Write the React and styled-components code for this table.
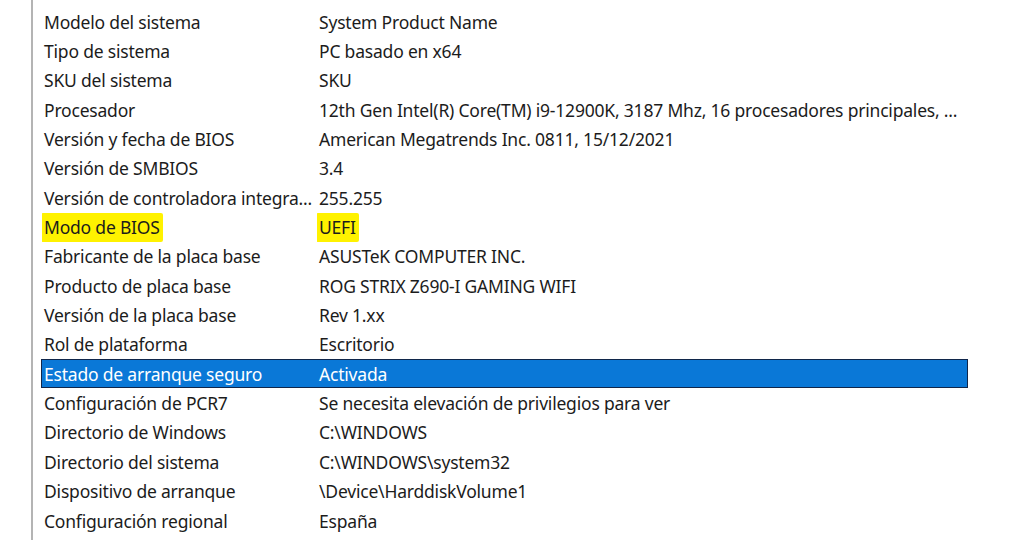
import React from 'react';
import styled, { createGlobalStyle } from 'styled-components';

const rows = [
  ['Modelo del sistema', 'System Product Name'],
  ['Tipo de sistema', 'PC basado en x64'],
  ['SKU del sistema', 'SKU'],
  ['Procesador', '12th Gen Intel(R) Core(TM) i9-12900K, 3187 Mhz, 16 procesadores principales, ...'],
  ['Versión y fecha de BIOS', 'American Megatrends Inc. 0811, 15/12/2021'],
  ['Versión de SMBIOS', '3.4'],
  ['Versión de controladora integra...', '255.255'],
  ['Modo de BIOS', 'UEFI', 'marked'],
  ['Fabricante de la placa base', 'ASUSTeK COMPUTER INC.'],
  ['Producto de placa base', 'ROG STRIX Z690-I GAMING WIFI'],
  ['Versión de la placa base', 'Rev 1.xx'],
  ['Rol de plataforma', 'Escritorio'],
  ['Estado de arranque seguro', 'Activada', 'selected'],
  ['Configuración de PCR7', 'Se necesita elevación de privilegios para ver'],
  ['Directorio de Windows', 'C:\\WINDOWS'],
  ['Directorio del sistema', 'C:\\WINDOWS\\system32'],
  ['Dispositivo de arranque', '\\Device\\HarddiskVolume1'],
  ['Configuración regional', 'España'],
];

export default function App() {
  return (
    <>
      <GlobalStyle />
      <Page>
        <Panel>
          {rows.map(([label, value, state]) => (
            <Row key={label} $selected={state === 'selected'}>
              <Cell>
                {state === 'marked' ? <Marker>{label}</Marker> : label}
              </Cell>
              <Cell>
                {state === 'marked' ? <Marker>{value}</Marker> : value}
              </Cell>
            </Row>
          ))}
        </Panel>
      </Page>
    </>
  );
}

//#region Styled Components
const GlobalStyle = createGlobalStyle`
  html, body {
    margin: 0;
    background: #ffffff;
  }
  body {
    font-family: "Noto Sans", "Open Sans", sans-serif;
  }
`;

const Page = styled.div`
  width: 1024px;
  height: 540px;
  overflow: hidden;
  background: #fff;
`;

const Panel = styled.div`
  margin-left: 31px;
  height: 100%;
  box-sizing: border-box;
  border-left: 2px solid #b4b4b4;
  padding: 7px 0 0 8px;
  display: flex;
  flex-direction: column;
`;

const Row = styled.div`
  box-sizing: border-box;
  width: 927px;
  height: 29.35px;
  flex: none;
  display: grid;
  grid-template-columns: 275px 1fr;
  align-items: center;
  font-size: 17.5px;
  letter-spacing: -0.2px;
  color: ${p => (p.$selected ? '#ffffff' : '#1c1c1c')};
  background: ${p => (p.$selected ? '#0a78d7' : 'transparent')};
  border: 1px solid ${p => (p.$selected ? '#10264a' : 'transparent')};
`;

const Cell = styled.div`
  white-space: nowrap;
  overflow: hidden;
  padding: 3px 6px 3px 2px;
`;

const Marker = styled.span`
  background: #fff200;
  margin-left: -3px;
  padding: 2px 3px 3px;
  border-radius: 2px;
`;
//#endregion
